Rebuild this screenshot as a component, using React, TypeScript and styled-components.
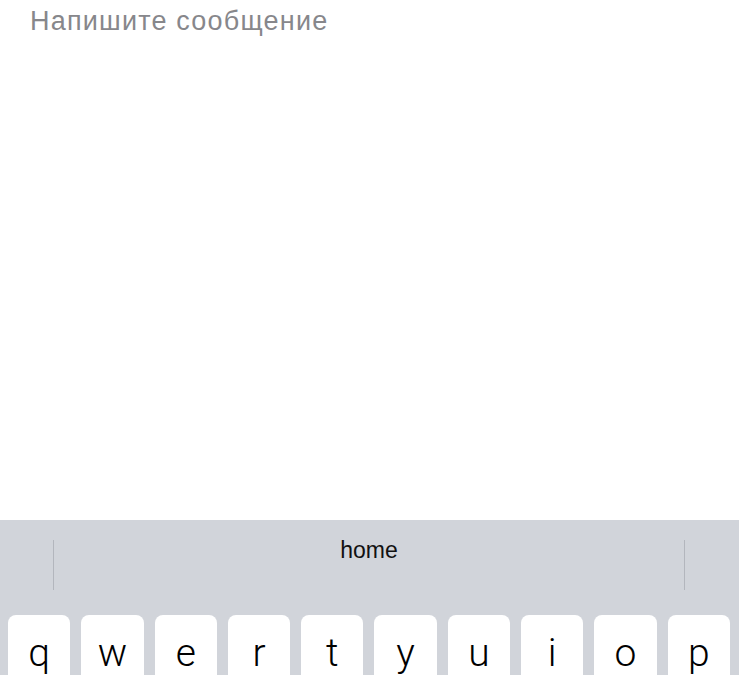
import React from 'react';
import styled, { createGlobalStyle } from 'styled-components';

const GlobalStyle = createGlobalStyle`
    html, body {
        margin: 0;
        padding: 0;
        background: #ffffff;
    }
    body {
        font-family: 'Liberation Sans', Arial, sans-serif;
    }
`;

const Screen = styled.div`
    width: 739px;
    height: 675px;
    display: flex;
    flex-direction: column;
    overflow: hidden;
    background: #ffffff;
`;

const MessageArea = styled.div`
    height: 520px;
    flex-shrink: 0;
    padding: 5px 0 0 30px;
    box-sizing: border-box;
`;

const Placeholder = styled.div`
    font-family: 'Liberation Sans', Arial, sans-serif;
    font-size: 27px;
    line-height: 32px;
    letter-spacing: 1.2px;
    color: #87878b;
`;

const Keyboard = styled.div`
    flex: 1;
    background: #d1d4da;
    display: flex;
    flex-direction: column;
`;

const SuggestionRow = styled.div`
    height: 95px;
    display: flex;
    align-items: flex-start;
    padding: 20px 54px 0 53px;
    box-sizing: border-box;
`;

const Suggestion = styled.div`
    flex: 1;
    display: flex;
    justify-content: center;
    font-family: 'Liberation Sans', Arial, sans-serif;
    font-size: 23px;
    line-height: 20px;
    color: #111;
`;

const Divider = styled.div`
    width: 1px;
    height: 50px;
    background: #b3b6bd;
`;

const Keys = styled.div`
    display: flex;
    gap: 11px;
    padding: 0 9px 0 8px;
`;

const Key = styled.div`
    flex: 1;
    height: 90px;
    background: #ffffff;
    border-radius: 8px;
    display: flex;
    justify-content: center;
    padding-top: 18px;
    box-sizing: border-box;
    font-family: 'Roboto', 'Liberation Sans', sans-serif;
    font-weight: 300;
    font-size: 39px;
    line-height: 40px;
    color: #000;
`;

const letters = ['q', 'w', 'e', 'r', 't', 'y', 'u', 'i', 'o', 'p'];

export default function App() {
    return (
        <Screen>
            <GlobalStyle />
            <MessageArea>
                <Placeholder>Напишите сообщение</Placeholder>
            </MessageArea>
            <Keyboard>
                <SuggestionRow>
                    <Divider />
                    <Suggestion>home</Suggestion>
                    <Divider />
                </SuggestionRow>
                <Keys>
                    {letters.map((l) => (
                        <Key key={l}>{l}</Key>
                    ))}
                </Keys>
            </Keyboard>
        </Screen>
    );
}
